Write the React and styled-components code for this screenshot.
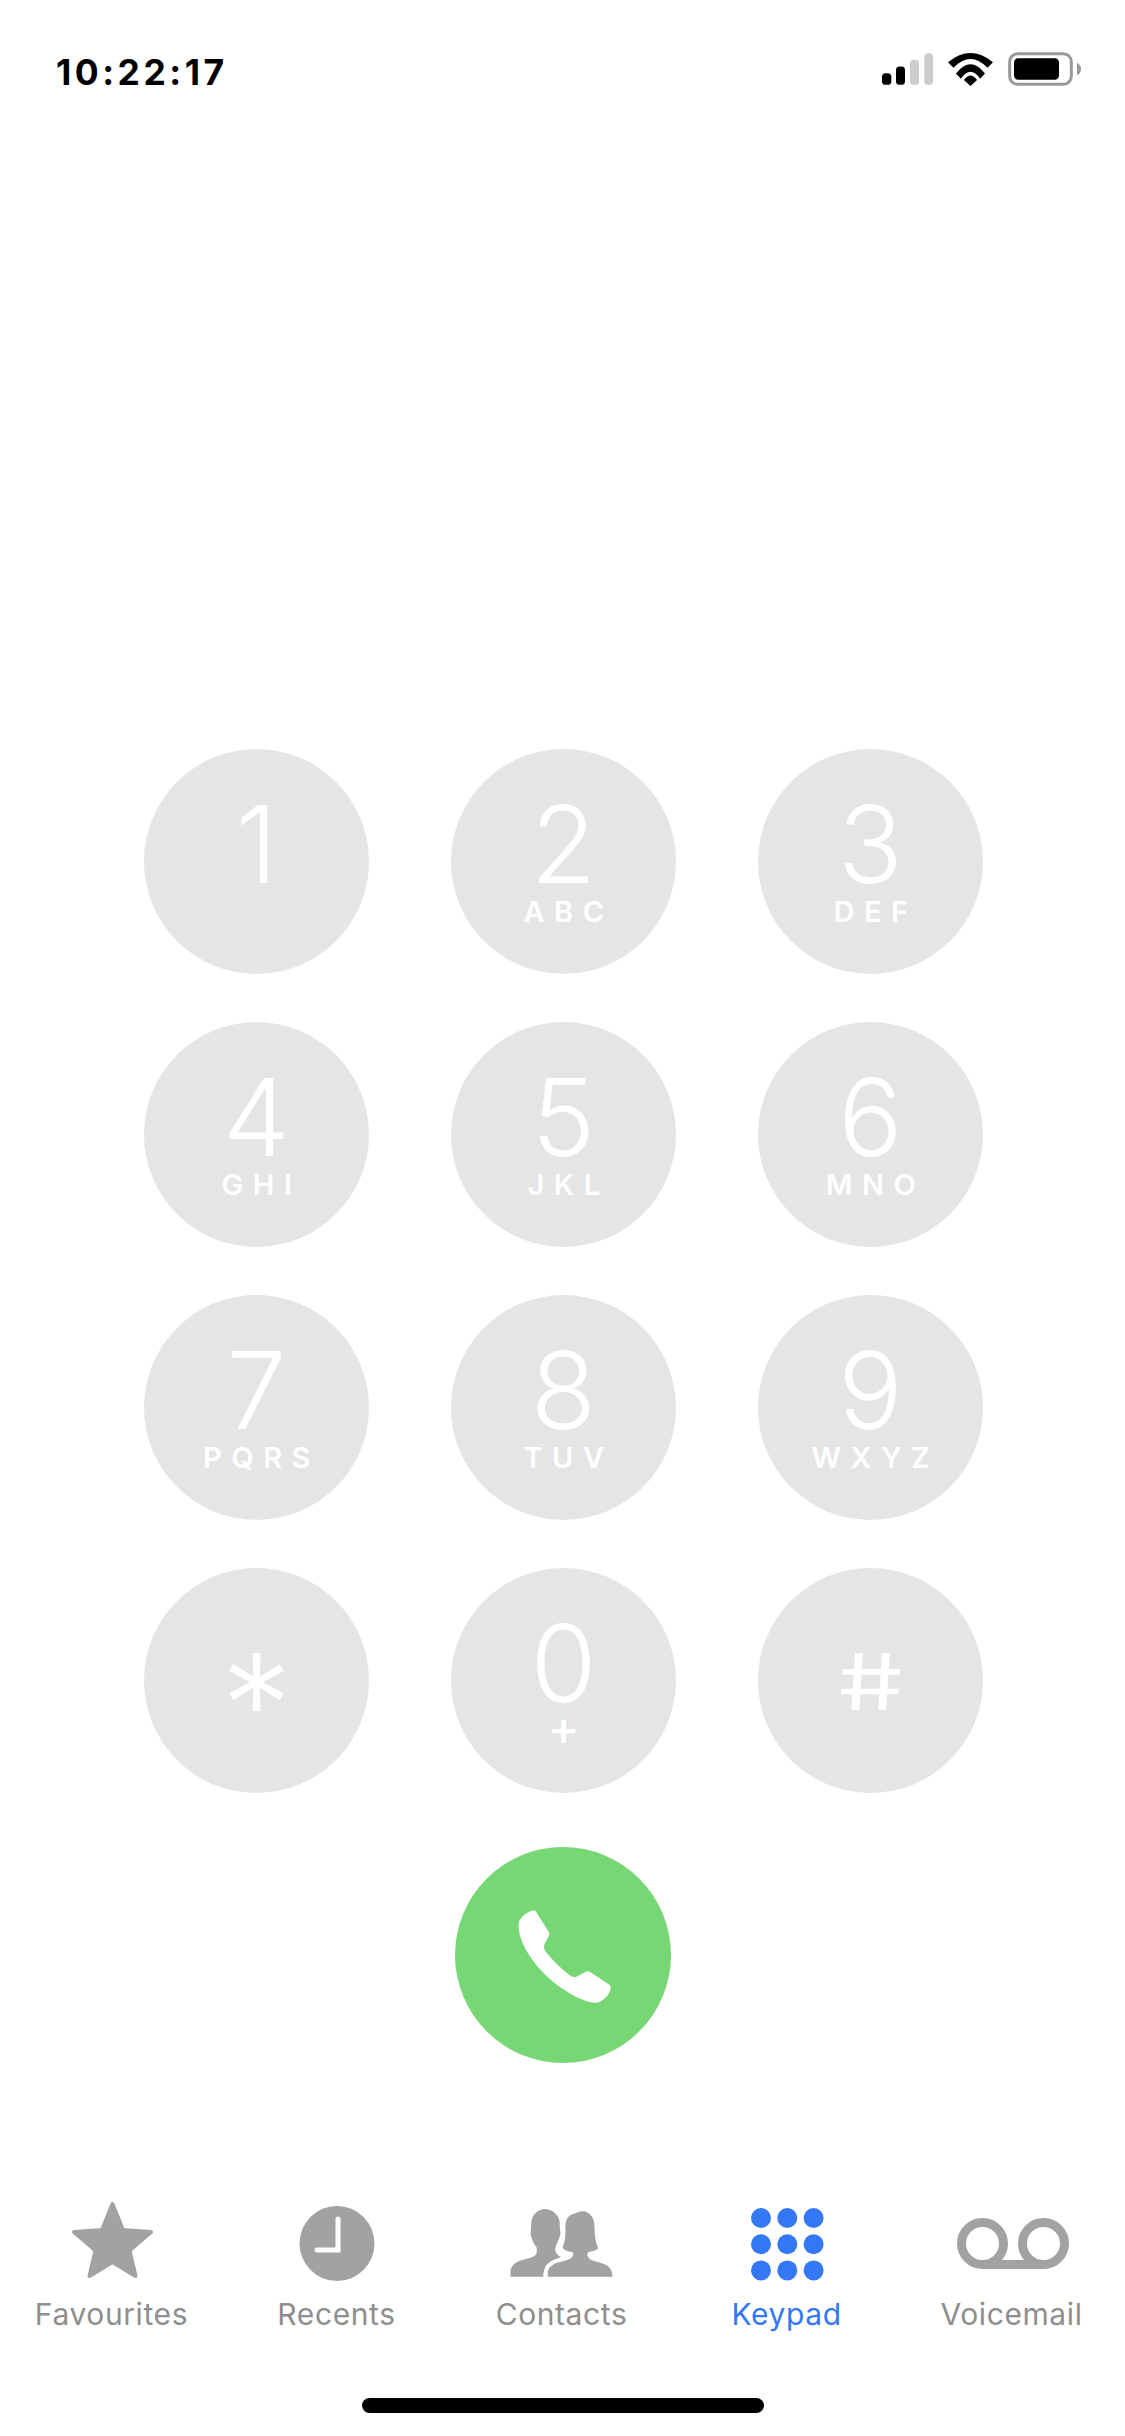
import React from "react";
import styled, { createGlobalStyle } from "styled-components";

const Global = createGlobalStyle`
  html, body { margin: 0; padding: 0; background: #fff; }
  body { font-family: Inter, "Liberation Sans", sans-serif; }
`;

const Page = styled.div`
  width: 1125px;
  height: 2436px;
  background: #fff;
  display: flex;
  flex-direction: column;
  overflow: hidden;
`;

const StatusBar = styled.div`
  height: 140px;
  display: flex;
  align-items: center;
  justify-content: space-between;
  padding: 0 44px 0 56px;
  box-sizing: border-box;
`;

const Time = styled.div`
  font-size: 35.5px;
  line-height: 26px;
  font-weight: 700;
  letter-spacing: 3.5px;
  color: #000;
  padding-top: 6px;
`;

const StatusIcons = styled.div`
  display: flex;
  align-items: center;
  gap: 15px;
  margin-top: -2px;
`;

const Keypad = styled.div`
  margin: 609px 0 0 144px;
  display: grid;
  grid-template-columns: repeat(3, 225px);
  grid-auto-rows: 225px;
  column-gap: 82px;
  row-gap: 48px;
`;

const Key = styled.div`
  width: 225px;
  height: 225px;
  border-radius: 50%;
  background: #e5e5e5;
  color: #fff;
  display: flex;
  flex-direction: column;
  align-items: center;
  box-sizing: border-box;
  padding-top: 56px;
`;

const Digit = styled.div`
  font-size: 107px;
  line-height: 78px;
  font-weight: 330;
`;

const Letters = styled.div`
  margin-top: 18px;
  font-size: 29px;
  line-height: 21px;
  font-weight: 600;
  letter-spacing: 9.5px;
  margin-right: -10px;
`;

const Plus = styled.div`
  margin-top: 15px;
  font-size: 48px;
  line-height: 21px;
  font-weight: 500;
`;

const Symbol = styled.div`
  margin-top: 18px;
  font-size: ${(p) => p.$size}px;
  font-weight: ${(p) => p.$weight};
  line-height: 60px;
  height: 60px;
  transform: translateY(${(p) => p.$shift}px) skewX(${(p) => p.$skew}deg) scaleX(${(p) => p.$stretch});
`;

const CallButton = styled.div`
  width: 216px;
  height: 216px;
  margin: 54px auto 0;
  border-radius: 50%;
  background: #78d775;
  flex-shrink: 0;
`;

const TabBar = styled.div`
  margin-top: 137px;
  display: grid;
  grid-template-columns: repeat(5, 225px);
`;

const Tab = styled.div`
  display: flex;
  flex-direction: column;
  align-items: center;
  color: ${(p) => (p.$active ? "#3478f6" : "#8e8e8e")};
`;

const TabIcon = styled.svg`
  width: 120px;
  height: 84px;
  display: block;
`;

const TabLabel = styled.div`
  margin: 14px 2px 0 0;
  font-size: 30px;
  line-height: 32px;
  font-weight: 400;
  letter-spacing: 0.6px;
  white-space: nowrap;
`;

const HomeBar = styled.div`
  width: 402px;
  height: 15px;
  margin: 68px auto 0;
  border-radius: 8px;
  background: #000;
  flex-shrink: 0;
`;

const keys = [
  ["1", ""], ["2", "ABC"], ["3", "DEF"],
  ["4", "GHI"], ["5", "JKL"], ["6", "MNO"],
  ["7", "PQRS"], ["8", "TUV"], ["9", "WXYZ"],
];

const grey = "#a2a2a2";

const Signal = () => (
  <svg width="51" height="32" viewBox="93 70 153 95">
    <rect x="93" y="130" width="28" height="35" rx="11" fill="#000" />
    <rect x="135" y="110" width="27" height="55" rx="11" fill="#000" />
    <rect x="177" y="90" width="27" height="75" rx="11" fill="#ccc" />
    <rect x="220" y="70" width="26" height="95" rx="11" fill="#ccc" />
  </svg>
);

const Wifi = () => (
  <svg width="45" height="33" viewBox="292 65 136 100">
    <path d="M292 93Q360 37 428 93L412 110Q360 56 308 110Z" fill="#000" />
    <path d="M316 127Q360 71 404 127L389 143Q360 101 331 143Z" fill="#000" />
    <path d="M340 147Q360 119 380 147L360 165Z" fill="#000" />
  </svg>
);

const Battery = () => (
  <svg width="73" height="34" viewBox="475 65 219 102">
    <rect x="480" y="70" width="185" height="92" rx="24" fill="none" stroke="#999" strokeWidth="9" />
    <rect x="493" y="84" width="135" height="64" rx="13" fill="#000" />
    <path d="M682 98Q694 104 694 116Q694 129 682 135Z" fill="#999" />
  </svg>
);

const PhoneGlyph = () => (
  <svg width="216" height="216" viewBox="45 50 648 648">
    <path
      d="M236 280C238 262 262 244 280 240C285 240 288 243 290 247L325 303C330 311 328 316 324 322L314 340C310 350 312 358 320 368C340 392 365 418 392 437C402 443 410 440 418 435L437 424C443 421 449 424 455 428L506 462C512 466 514 472 510 482C504 498 488 515 468 517C440 518 400 498 360 470C325 445 290 410 265 370C248 342 234 310 236 280Z"
      fill="#fff"
    />
  </svg>
);

const StarIcon = () => (
  <TabIcon viewBox="0 0 120 84">
    <path
      d="M59.5 4L70 30L98 32L76.5 50.5L82.5 76L59.5 62L36.5 76L42.5 50.5L21 32L49 30Z"
      fill={grey}
      stroke={grey}
      strokeWidth="4"
      strokeLinejoin="round"
    />
  </TabIcon>
);

const ClockIcon = () => (
  <TabIcon viewBox="0 0 120 84">
    <circle cx="59" cy="43.5" r="37.5" fill={grey} />
    <path d="M60 19V50H39" fill="none" stroke="#fff" strokeWidth="5" strokeLinecap="round" strokeLinejoin="miter" />
  </TabIcon>
);

const ContactsIcon = () => (
  <TabIcon viewBox="127.5 60 360 252">
    <path
      fill={grey}
      d="M150 290V272C152 258 165 246 182 241C198 236 212 234 222 228C229 224 230 212 228 202C220 192 212 175 210 158C212 150 212 135 213 122C218 100 235 88 252 87C275 88 292 102 297 122C298 135 298 148 300 158C298 172 292 185 286 198C282 210 284 222 302 232C280 238 262 246 254 262C250 272 248 280 248 290Z"
    />
    <path
      fill={grey}
      d="M262 290V274C265 260 280 250 298 246C315 242 332 238 337 228C339 222 338 218 334 216C322 214 310 210 306 203C312 188 315 172 315 150C313 125 320 108 335 103L345 100C355 92 372 92 382 98C395 106 402 120 402 140C402 165 405 185 413 205C408 212 395 214 384 216C378 222 380 232 392 240C410 246 430 250 442 258C452 266 456 278 456 290Z"
    />
  </TabIcon>
);

const KeypadIcon = () => {
  const pos = [0, 1, 2];
  return (
    <TabIcon viewBox="0 0 120 84">
      {pos.flatMap((r) =>
        pos.map((c) => (
          <circle key={`${r}${c}`} cx={33 + c * 26.3} cy={18 + r * 26.2} r="10" fill="#3478f6" />
        ))
      )}
    </TabIcon>
  );
};

const VoicemailIcon = () => (
  <TabIcon viewBox="0 0 120 84">
    <circle cx="29.5" cy="43.5" r="21" fill="none" stroke={grey} strokeWidth="9" />
    <circle cx="90.5" cy="43.5" r="21" fill="none" stroke={grey} strokeWidth="9" />
    <path d="M29.5 64.5H90.5" fill="none" stroke={grey} strokeWidth="9" />
  </TabIcon>
);

const tabs = [
  ["Favourites", StarIcon],
  ["Recents", ClockIcon],
  ["Contacts", ContactsIcon],
  ["Keypad", KeypadIcon, true],
  ["Voicemail", VoicemailIcon],
];

export default function App() {
  return (
    <Page>
      <Global />
      <StatusBar>
        <Time>10:22:17</Time>
        <StatusIcons>
          <Signal />
          <Wifi />
          <Battery />
        </StatusIcons>
      </StatusBar>
      <Keypad>
        {keys.map(([d, l]) => (
          <Key key={d}>
            <Digit>{d}</Digit>
            {l && <Letters>{l}</Letters>}
          </Key>
        ))}
        <Key>
          <Symbol $size={142} $weight={300} $shift={32} $skew={0} $stretch={1}>*</Symbol>
        </Key>
        <Key>
          <Digit>0</Digit>
          <Plus>+</Plus>
        </Key>
        <Key>
          <Symbol $size={78} $weight={400} $shift={10} $skew={9} $stretch={1.35}>#</Symbol>
        </Key>
      </Keypad>
      <CallButton>
        <PhoneGlyph />
      </CallButton>
      <TabBar>
        {tabs.map(([label, Icon, active]) => (
          <Tab key={label} $active={active}>
            <Icon />
            <TabLabel>{label}</TabLabel>
          </Tab>
        ))}
      </TabBar>
      <HomeBar />
    </Page>
  );
}
